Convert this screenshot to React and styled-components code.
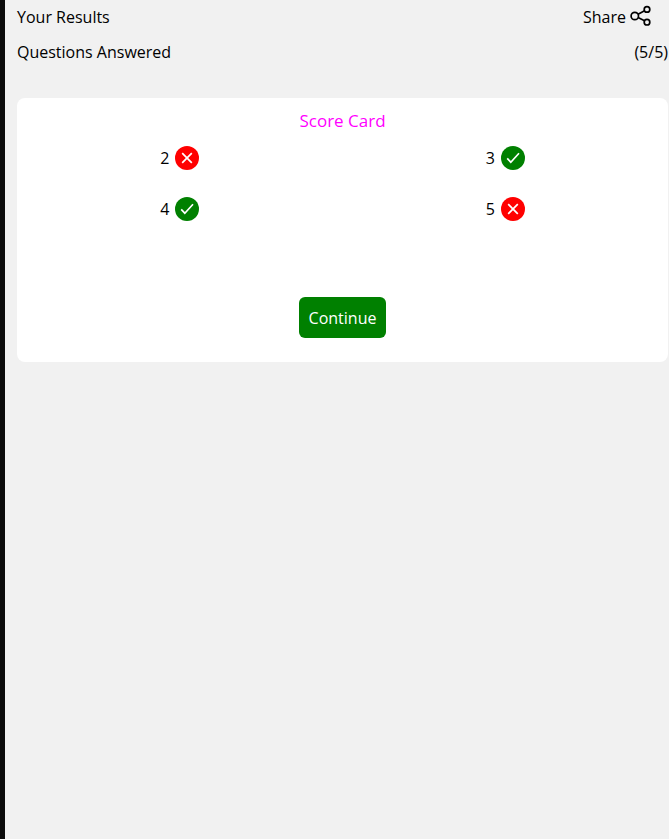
import React from "react";
import styled, { createGlobalStyle } from "styled-components";

const GlobalStyle = createGlobalStyle`
  *, *::before, *::after {
    box-sizing: border-box;
  }
  body {
    margin: 0;
    background: #f1f1f1;
    color: #000;
    font-family: "Segoe UI", "Open Sans", "Noto Sans", sans-serif;
    font-size: 16px;
    line-height: 24px;
  }
`;

const Page = styled.main`
  min-height: 100vh;
  padding: 5px 1px 24px 12px;
  border-left: 5px solid #0b0b0b;
`;

const HeaderRow = styled.header`
  display: flex;
  align-items: center;
  justify-content: space-between;
  padding-right: 17px;
`;

const SummaryRow = styled.div`
  display: flex;
  align-items: center;
  justify-content: space-between;
  margin-top: 11px;
`;

const PageTitle = styled.h1`
  margin: 0;
  font-size: 16px;
  font-weight: 400;
`;

const ShareButton = styled.button`
  display: flex;
  align-items: flex-start;
  gap: 4px;
  padding: 0;
  border: 0;
  background: none;
  color: inherit;
  font: inherit;
  cursor: pointer;
`;

const Card = styled.section`
  display: flex;
  flex-direction: column;
  align-items: center;
  margin-top: 34px;
  padding: 11px 0 24px;
  border-radius: 8px;
  background: #fff;
`;

const CardTitle = styled.h2`
  margin: 0;
  color: #f0f;
  font-size: 17px;
  font-weight: 400;
`;

const ScoreGrid = styled.ul`
  display: grid;
  grid-template-columns: 1fr 1fr;
  row-gap: 27px;
  width: 100%;
  margin: 13px 0 76px;
  padding: 0;
  list-style: none;
`;

const ScoreItem = styled.li`
  display: flex;
  align-items: center;
  justify-content: center;
  gap: 6px;
  height: 24px;
  line-height: 26px;
`;

const Badge = styled.span`
  display: flex;
  width: 24px;
  height: 24px;
  border-radius: 50%;
  background: ${({ $correct }) => ($correct ? "#008000" : "#ff0000")};
`;

const ContinueButton = styled.button`
  padding: 9px 10px 8px;
  border: 0;
  border-radius: 6px;
  background: #008000;
  color: #fff;
  font: inherit;
  cursor: pointer;
`;

const scores = [
  { number: 2, correct: false },
  { number: 3, correct: true },
  { number: 4, correct: true },
  { number: 5, correct: false },
];

function ShareIcon() {
  return (
    <svg width="21" height="22" viewBox="0 0 21 22" fill="none" stroke="#000" strokeWidth="1.7" aria-hidden="true">
      <circle cx="4.8" cy="11" r="3.7" />
      <circle cx="17" cy="4.4" r="2.8" />
      <circle cx="17" cy="17.2" r="2.8" />
      <path d="M8.1 9.2 14.5 5.8M8.1 12.6l6.4 3.2" />
    </svg>
  );
}

function ResultIcon({ correct }) {
  return (
    <svg
      width="24"
      height="24"
      viewBox="0 0 24 24"
      fill="none"
      stroke="#fff"
      strokeWidth="1.7"
      role="img"
      aria-label={correct ? "Correct" : "Incorrect"}
    >
      <path d={correct ? "M6.2 12.4 9.8 16.2 18 7.2" : "M7.2 7.2l9.6 9.6M16.8 7.2l-9.6 9.6"} />
    </svg>
  );
}

export default function App() {
  return (
    <>
      <GlobalStyle />
      <Page>
        <HeaderRow>
          <PageTitle>Your Results</PageTitle>
          <ShareButton type="button">
            Share
            <ShareIcon />
          </ShareButton>
        </HeaderRow>
        <SummaryRow>
          <span>Questions Answered</span>
          <span>(5/5)</span>
        </SummaryRow>
        <Card>
          <CardTitle>Score Card</CardTitle>
          <ScoreGrid>
            {scores.map(({ number, correct }) => (
              <ScoreItem key={number}>
                <span>{number}</span>
                <Badge $correct={correct}>
                  <ResultIcon correct={correct} />
                </Badge>
              </ScoreItem>
            ))}
          </ScoreGrid>
          <ContinueButton type="button">Continue</ContinueButton>
        </Card>
      </Page>
    </>
  );
}
